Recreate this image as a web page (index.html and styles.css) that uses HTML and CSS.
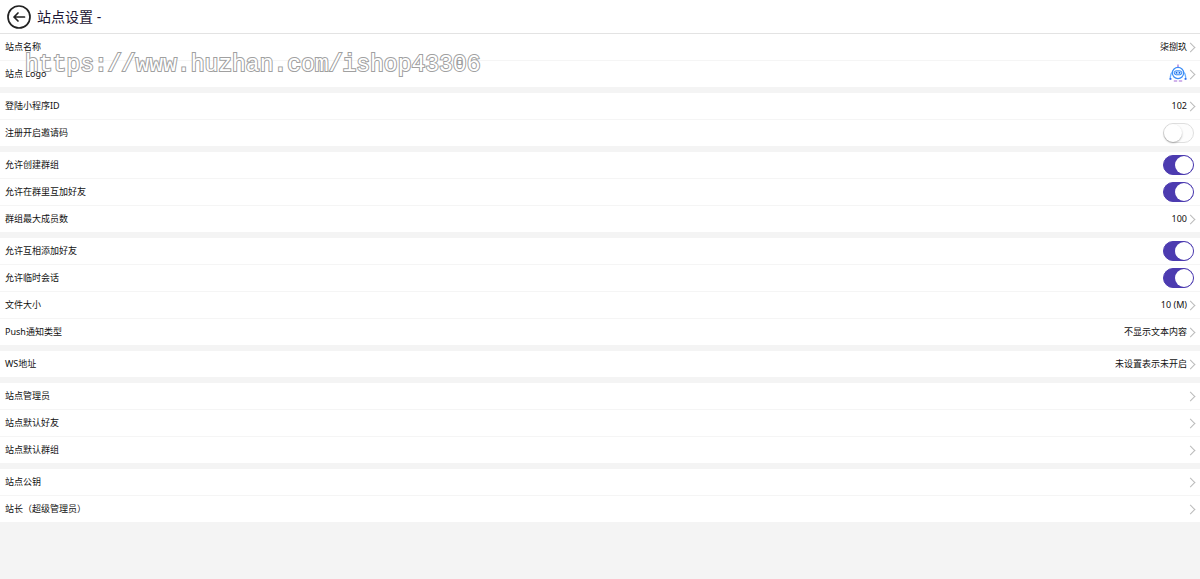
FILE: index.html
```html
<!DOCTYPE html>
<html lang="zh-CN">
<head>
  <meta charset="UTF-8">
  <meta name="viewport" content="width=device-width, initial-scale=1">
  <title>站点设置</title>
  <link rel="stylesheet" href="styles.css">
</head>
<body>

  <header class="header">
    <button class="back" type="button" aria-label="返回">
      <svg viewBox="0 0 24 24" width="24" height="24" fill="none" stroke="#222" stroke-width="1.7">
        <circle cx="12" cy="12" r="11"/>
        <path d="M17.5 12H7M11 8L7 12l4 4" stroke-linecap="round" stroke-linejoin="round"/>
      </svg>
    </button>
    <h1>站点设置 -</h1>
  </header>

  <main>
    <section class="group">
      <a class="row link" href="#name"><span>站点名称</span><span class="value">柒捌玖</span></a>
      <a class="row link" href="#logo">
        <span>站点 Logo</span>
        <span class="value">
          <svg class="logo" viewBox="0 0 18 18" width="18" height="18" fill="none" stroke="#3b8cf5">
            <path d="M9 .5v3" stroke="#a46bd8" stroke-width="1.2"/>
            <circle cx="9" cy="9" r="5.6" stroke-width="1.2"/>
            <rect x="5.2" y="6.8" width="7.6" height="4" rx="2" fill="#b9dcff"/>
            <path d="M7.5 8v1.6M10.5 8v1.6" stroke="#1f5fe0" stroke-width="1.2"/>
            <path d="M3 8.5C1.5 10 1.2 12 1.3 15.5M15 8.5c1.5 1.5 1.8 3.5 1.7 7" stroke="#6db0ff" stroke-width="1.3"/>
            <path d="M.6 14.8h1.8M15.6 14.8h1.8" stroke="#2f6ff0" stroke-width="1.8"/>
            <path d="M4.8 17h3.4M9.8 17h3.4" stroke="#a46bd8" stroke-width="1.2"/>
          </svg>
        </span>
      </a>
    </section>

    <section class="group">
      <a class="row link" href="#app-id"><span>登陆小程序ID</span><span class="value">102</span></a>
      <label class="row"><span>注册开启邀请码</span><input class="switch" type="checkbox"></label>
    </section>

    <section class="group">
      <label class="row"><span>允许创建群组</span><input class="switch" type="checkbox" checked></label>
      <label class="row"><span>允许在群里互加好友</span><input class="switch" type="checkbox" checked></label>
      <a class="row link" href="#members"><span>群组最大成员数</span><span class="value">100</span></a>
    </section>

    <section class="group">
      <label class="row"><span>允许互相添加好友</span><input class="switch" type="checkbox" checked></label>
      <label class="row"><span>允许临时会话</span><input class="switch" type="checkbox" checked></label>
      <a class="row link" href="#file-size"><span>文件大小</span><span class="value">10 (M)</span></a>
      <a class="row link" href="#push"><span>Push通知类型</span><span class="value">不显示文本内容</span></a>
    </section>

    <section class="group">
      <a class="row link" href="#ws"><span>WS地址</span><span class="value">未设置表示未开启</span></a>
    </section>

    <section class="group">
      <a class="row link" href="#managers"><span>站点管理员</span></a>
      <a class="row link" href="#friends"><span>站点默认好友</span></a>
      <a class="row link" href="#groups"><span>站点默认群组</span></a>
    </section>

    <section class="group">
      <a class="row link" href="#public-key"><span>站点公钥</span></a>
      <a class="row link" href="#owner"><span>站长（超级管理员）</span></a>
    </section>
  </main>

  <div class="watermark">https://www.huzhan.com/ishop43306</div>

</body>
</html>
```

FILE: styles.css
```css
* {
  box-sizing: border-box;
}

body {
  margin: 0;
  background: #f4f4f4;
  color: #111;
  font-family: "Noto Sans", "Noto Sans CJK SC", sans-serif;
  font-size: 9px;
  line-height: 14px;
}

.header {
  display: flex;
  align-items: center;
  gap: 6px;
  height: 34px;
  padding: 0 7px;
  background: #fff;
  border-bottom: 1px solid #e3e3e3;
}

.header h1 {
  margin: 0;
  color: #1c1633;
  font-size: 14px;
  font-weight: 400;
  line-height: 20px;
}

.back {
  display: flex;
  padding: 0;
  border: 0;
  background: none;
  cursor: pointer;
}

.group {
  margin-bottom: 6px;
  background: #fff;
}

.row {
  display: flex;
  align-items: center;
  height: 26px;
  padding: 0 6px 0 5px;
  color: inherit;
  text-decoration: none;
}

.row + .row {
  height: 27px;
  border-top: 1px solid #f5f5f5;
}

.value,
.switch {
  margin-left: auto;
}

.logo {
  display: block;
  margin-bottom: 2px;
}

/* right arrow */
.link::after {
  content: "";
  width: 6px;
  height: 6px;
  border: solid #bbb;
  border-width: 1px 1px 0 0;
  transform: rotate(45deg);
}

.link > span:only-child {
  margin-right: auto;
}

.switch {
  appearance: none;
  display: flex;
  width: 31px;
  height: 20px;
  margin-top: 0;
  margin-right: 0;
  margin-bottom: 0;
  border: 1px solid #dfdfdf;
  border-radius: 10px;
  background: #fdfdfd;
  cursor: pointer;
}

.switch::before {
  content: "";
  width: 18px;
  height: 18px;
  border-radius: 50%;
  background: #fff;
  box-shadow: 0 1px 2px rgba(0, 0, 0, 0.3);
}

.switch:checked {
  justify-content: flex-end;
  border-color: #4c3bb0;
  background: #4c3bb0;
}

.switch:checked::before {
  box-shadow: none;
}

.watermark {
  position: absolute;
  top: 50px;
  left: 25px;
  color: #fff;
  font-family: "Liberation Mono", monospace;
  font-size: 23px;
  line-height: 30px;
  -webkit-text-stroke: 2px #a0a0a0;
  paint-order: stroke fill;
  pointer-events: none;
}
```
